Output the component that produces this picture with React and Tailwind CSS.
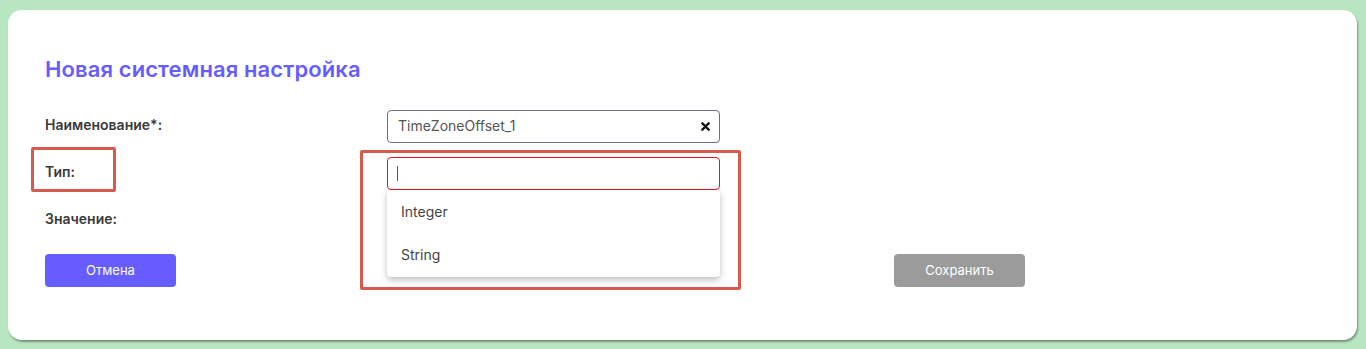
import React from 'react';

const font = { fontFamily: 'Inter, "Noto Sans", sans-serif' };

const Label = ({ children }) => (
    <div className="flex items-center h-[33px] pb-[4px] text-[14px] font-semibold text-[#3a3a3a]">{children}</div>
);

const App = () => {
    return (
        <div className="min-h-[349px] bg-[#b8e6c1] pt-[10px] pl-[8px] pr-[9px] pb-[9px]" style={font}>
            <div className="relative bg-white rounded-[14px] shadow-[1px_2px_2px_rgba(0,0,0,0.35)] h-[330px] pl-[37px] pt-[44px]">
                <h1 className="text-[22px] font-semibold text-[#675dff] leading-[30px] tracking-[0.1px]">
                    Новая системная настройка
                </h1>

                <div className="w-[980px] mt-[26px]">
                    <div className="grid grid-cols-[342px_333px] gap-y-[14px]">
                        <Label>Наименование*:</Label>
                        <div className="flex items-center h-[33px] border border-[#6e6e7e] rounded-[4px] px-[10px]">
                            <span className="flex-1 text-[14px] text-[#555] pb-[3px]">TimeZoneOffset_1</span>
                            <svg width="9" height="9" viewBox="0 0 10 10" className="mr-[-1px]">
                                <path d="M1.5 1.5 L8.5 8.5 M8.5 1.5 L1.5 8.5" stroke="#111" strokeWidth="2.6" strokeLinecap="round" />
                            </svg>
                        </div>

                        <Label>Тип:</Label>
                        <div className="relative">
                            <div className="flex items-center h-[33px] border border-[#e8141c] rounded-[4px] px-[9px]">
                                <span className="w-[1px] h-[15px] bg-[#c0282e]"></span>
                            </div>
                            <div className="absolute z-10 left-0 right-0 top-[33px] bg-white rounded-b-[4px] shadow-[0_3px_6px_rgba(0,0,0,0.25)] pb-[1px]">
                                <div className="h-[43px] flex items-center px-[14px] text-[14px] text-[#444]">Integer</div>
                                <div className="h-[43px] flex items-center px-[14px] text-[14px] text-[#444]">String</div>
                            </div>
                        </div>

                        <Label>Значение:</Label>
                        <div className="h-[33px]"></div>
                    </div>

                    <div className="flex justify-between mt-[17px]">
                        <button className="w-[131px] h-[33px] rounded-[4px] bg-[#675dff] text-white text-[13px]">Отмена</button>
                        <button className="w-[131px] h-[33px] rounded-[4px] bg-[#9b9b9b] text-white text-[13px]">Сохранить</button>
                    </div>
                </div>

                {/* annotation frames */}
                <div className="absolute left-[23px] top-[137px] w-[85px] h-[45px] border-[3px] border-[#d75a4d] rounded-[2px] pointer-events-none"></div>
                <div className="absolute left-[352px] top-[140px] w-[381px] h-[140px] border-[3px] border-[#d75a4d] rounded-[2px] pointer-events-none"></div>
            </div>
        </div>
    );
};

export default App;
